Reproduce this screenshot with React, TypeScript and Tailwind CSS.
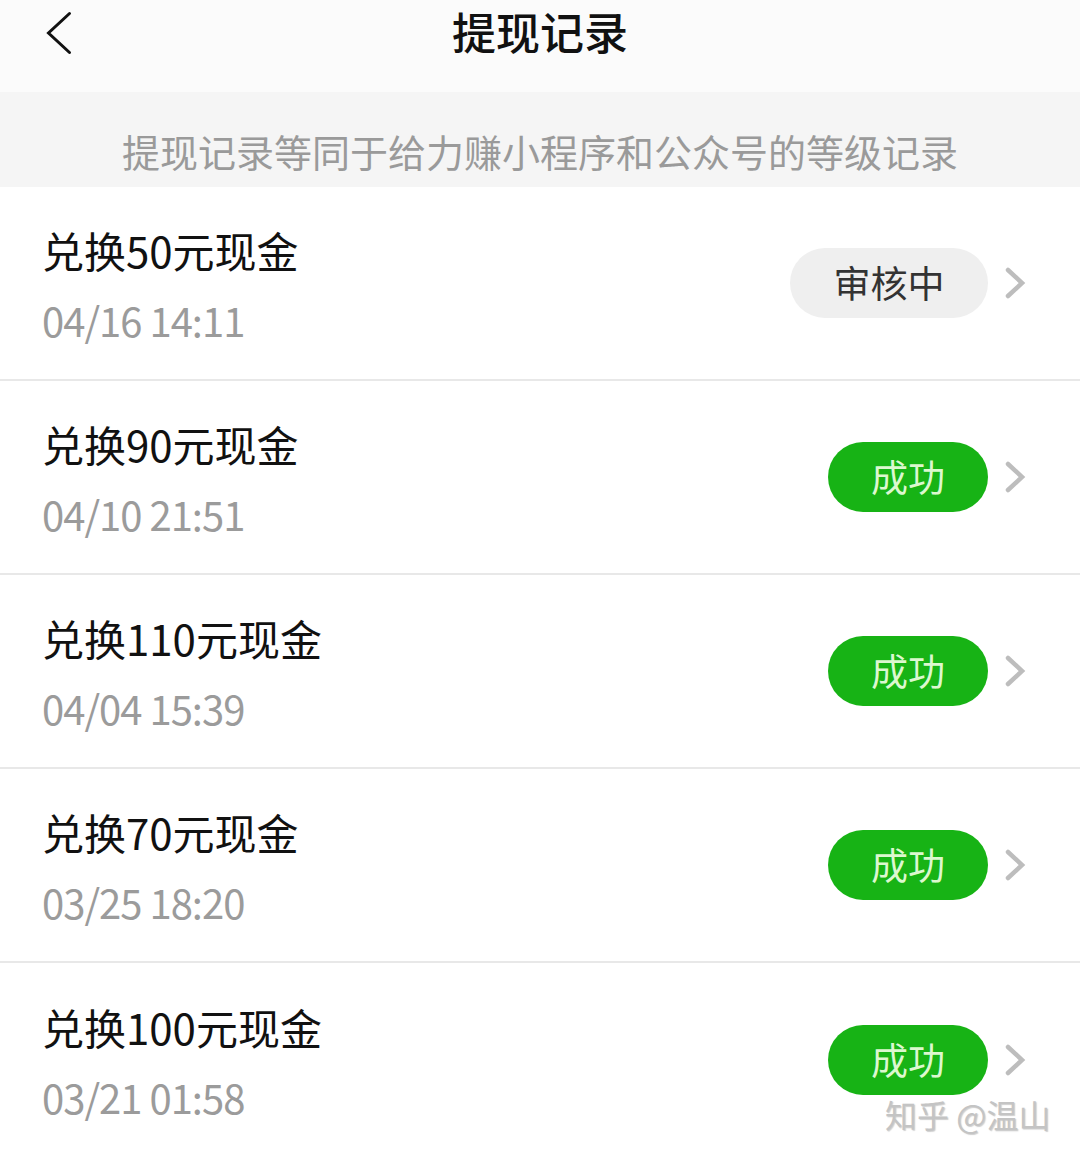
const records = [
  { title: '兑换50元现金', time: '04/16 14:11', status: 'pending' },
  { title: '兑换90元现金', time: '04/10 21:51', status: 'success' },
  { title: '兑换110元现金', time: '04/04 15:39', status: 'success' },
  { title: '兑换70元现金', time: '03/25 18:20', status: 'success' },
  { title: '兑换100元现金', time: '03/21 01:58', status: 'success' },
];

const font = { fontFamily: '"Noto Sans CJK SC", "Noto Sans", sans-serif' };

function Chevron({ className, width = 4 }: { className?: string; width?: number }) {
  return (
    <svg viewBox="0 0 20 32" className={className} fill="none" stroke="currentColor" strokeWidth={width} strokeLinecap="round" strokeLinejoin="miter">
      <path d="M3 3 L17 16 L3 29" />
    </svg>
  );
}

function StatusBadge({ status }: { status: string }) {
  if (status === 'pending') {
    return (
      <span className="flex h-[70px] w-[198px] items-center justify-center rounded-[35px] bg-[#efefef] text-[37px] text-[#333]">
        审核中
      </span>
    );
  }
  return (
    <span className="flex h-[70px] w-[160px] items-center justify-center rounded-[35px] bg-[#17b315] text-[37px] text-[#dcf8cf]">
      成功
    </span>
  );
}

export default function App() {
  return (
    <div className="relative flex h-[1157px] w-[1080px] flex-col overflow-hidden bg-white" style={font}>
      <header className="relative flex h-[92px] items-start justify-center bg-[#fbfbfb] pt-[7px]">
        <Chevron width={2} className="absolute left-[44px] top-[9px] h-[48px] w-[30px] rotate-180 text-[#111]" />
        <h1 className="text-[44px] font-medium leading-[48px] text-[#111]">提现记录</h1>
      </header>

      <div className="flex h-[96px] items-end justify-center bg-[#f5f5f5] pb-[8px]">
        <p className="text-[38px] leading-[56px] text-[#9a9a9a]">提现记录等同于给力赚小程序和公众号的等级记录</p>
      </div>

      <ul className="flex flex-col">
        {records.map((r, i) => (
          <li
            key={r.time}
            className={`flex h-[194px] items-center pl-[42px] pr-[54px] ${i < records.length - 1 ? 'border-b-2 border-[#e8e8e8]' : ''}`}
          >
            <div className="flex flex-1 flex-col gap-[14px] pt-[4px]">
              <span className="text-[42px] leading-[56px] text-[#111]">{r.title}</span>
              <span className="text-[40px] leading-[56px] tracking-[-1px] text-[#9b9b9b]">{r.time}</span>
            </div>
            <div className="flex items-center gap-[16px]">
              <StatusBadge status={r.status} />
              <Chevron width={4.5} className="h-[32px] w-[22px] text-[#bdbdbd]" />
            </div>
          </li>
        ))}
      </ul>

      <span className="absolute left-[885px] top-[1090px] text-[32px] text-[#c4c4c4] [text-shadow:1px_1px_1px_#8886]">
        知乎 @温山
      </span>
    </div>
  );
}
